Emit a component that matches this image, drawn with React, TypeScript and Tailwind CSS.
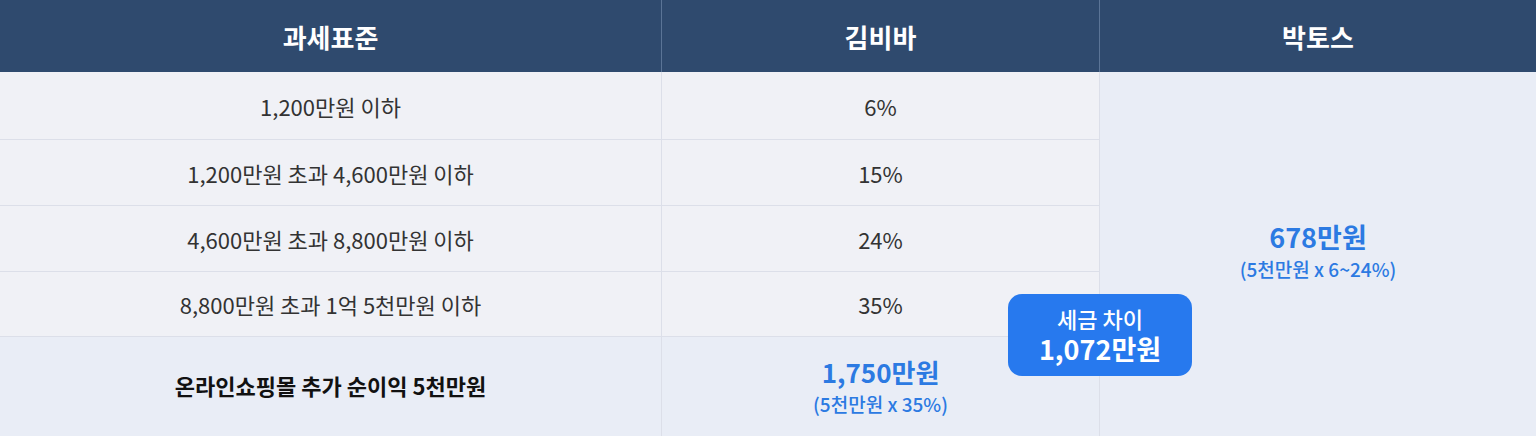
import React from "react";

const font = { fontFamily: '"Noto Sans CJK KR", "Noto Sans", sans-serif' };

export default function App() {
  const rows = [
    ["1,200만원 이하", "6%"],
    ["1,200만원 초과 4,600만원 이하", "15%"],
    ["4,600만원 초과 8,800만원 이하", "24%"],
    ["8,800만원 초과 1억 5천만원 이하", "35%"],
  ];
  return (
    <div className="w-[1536px] h-[436px] overflow-hidden bg-[#e9edf6]" style={font}>
      <div className="relative grid grid-cols-[662px_438px_436px] grid-rows-[72px_68px_66px_66px_65px_99px]">
        <div className="flex items-center justify-center bg-[#2f4a6e] border-r border-[#5b7496] text-white text-[26px] font-bold">과세표준</div>
        <div className="flex items-center justify-center bg-[#2f4a6e] border-r border-[#5b7496] text-white text-[26px] font-bold">김비바</div>
        <div className="flex items-center justify-center bg-[#2f4a6e] text-white text-[26px] font-bold">박토스</div>

        {rows.map(([a, b], i) => (
          <React.Fragment key={i}>
            <div
              className="flex items-center justify-center bg-[#f0f1f6] border-r border-b border-[#dcdfe9] text-[22px] text-[#333] pt-[1px]"
              style={{ gridColumn: 1, gridRow: i + 2 }}
            >
              {a}
            </div>
            <div
              className="flex items-center justify-center bg-[#f0f1f6] border-r border-b border-[#dcdfe9] text-[22px] text-[#333] pt-[1px]"
              style={{ gridColumn: 2, gridRow: i + 2 }}
            >
              {b}
            </div>
          </React.Fragment>
        ))}

        <div className="col-start-3 row-start-2 row-span-5 flex flex-col items-center justify-center bg-[#e9edf6] pb-[2px]">
          <div className="text-[27px] font-bold text-[#2c7ae2] leading-[32px]">678만원</div>
          <div className="text-[19px] font-medium text-[#2c7ae2] leading-[32px]">(5천만원 x 6~24%)</div>
        </div>

        <div className="col-start-1 row-start-6 flex items-center justify-center bg-[#e9edf6] border-r border-[#dcdfe9] text-[22px] font-bold text-[#111] pb-[2px]">
          온라인쇼핑몰 추가 순이익 5천만원
        </div>
        <div className="col-start-2 row-start-6 flex flex-col items-center justify-center bg-[#e9edf6] border-r border-[#dcdfe9] pt-[2px]">
          <div className="text-[26px] font-bold text-[#2c7ae2] leading-[32px]">1,750만원</div>
          <div className="text-[19px] font-medium text-[#2c7ae2] leading-[32px]">(5천만원 x 35%)</div>
        </div>

        <div className="absolute left-[1008px] top-[294px] w-[184px] h-[82px] rounded-[14px] bg-[#2779ee] flex flex-col items-center justify-center text-white">
          <div className="text-[22px] font-medium leading-[28px]">세금 차이</div>
          <div className="text-[27px] font-bold leading-[34px]">1,072만원</div>
        </div>
      </div>
    </div>
  );
}
